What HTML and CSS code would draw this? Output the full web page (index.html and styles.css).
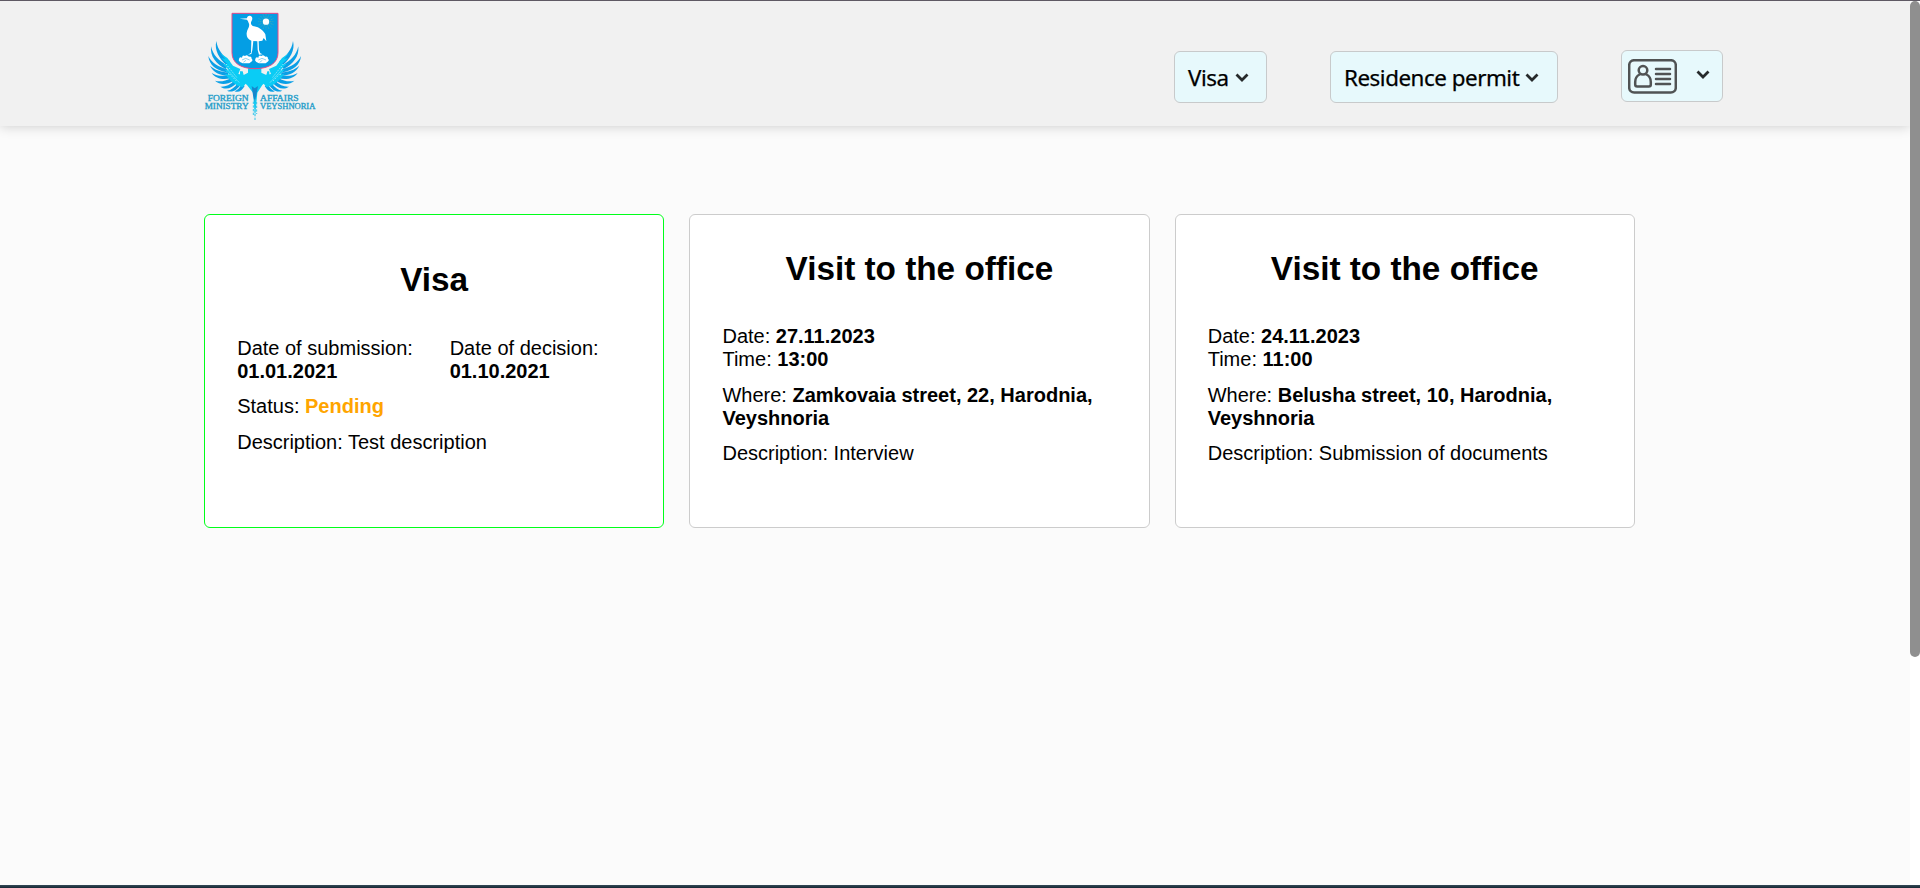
FILE: index.html
```html
<!DOCTYPE html>
<html lang="en">
<head>
<meta charset="utf-8">
<title>Foreign Affairs Ministry Veyshnoria</title>
<link rel="stylesheet" href="styles.css">
</head>
<body>
<div class="page">
<div class="view">
  <header class="header">
    <a class="logo">
      <svg width="114" height="114" viewBox="42 33 342 342">
        <defs>
          <g id="wing">
            <g fill="#0b9fe6">
              <path d="M79 123C83 150 98 166 120 184L111 196C88 178 72 150 79 123Z"/>
              <path d="M63 139C69 166 85 181 112 197L107 207C78 192 60 170 63 139Z"/>
              <path d="M55 168C65 188 83 201 112 207L110 217C80 212 57 195 55 168Z"/>
              <path d="M60 197C75 210 92 216 114 217L115 227C90 226 69 217 60 197Z"/>
              <path d="M65 219C80 228 96 229 118 226L122 235C98 240 77 236 65 219Z"/>
              <path d="M75 242C90 246 105 244 124 233L130 242C111 254 91 256 75 242Z"/>
              <path d="M91 260C106 261 119 256 134 241L140 249C126 265 107 271 91 260Z"/>
              <path d="M111 272C124 270 134 262 144 248L151 254C142 269 127 280 111 272Z"/>
              <path d="M134 274C144 270 149 263 155 253L164 258C157 271 146 279 134 274Z"/>
            </g>
            <path fill="#0accf5" d="M91 160L112 174L129 197L151 207L145 222L160 225L163 238L169 249L158 262L140 256L120 240L105 222L119 224L104 209L116 209L99 192L112 192L94 174L106 177Z"/>
            <path d="M108 192L140 232M112 209L150 250M120 223L139 243" stroke="#e9f5f8" stroke-width="2" stroke-dasharray="4 4"/>
          </g>
        </defs>
        <use href="#wing"/>
        <use href="#wing" transform="translate(388 0) scale(-1 1)"/>
        <path fill="#0accf5" d="M174 205H214V218L229 225L232 214H238V237L217 255L202 278L195 350L189 278L171 255L150 237V214H158L161 225L174 218Z"/>
        <path fill="#1687cc" d="M185 258L194 265L204 258L199 286L194 306L189 286Z"/>
        <path d="M190 305V346M195 298V363M200 306V342" stroke="#39c5ea" stroke-width="3" stroke-dasharray="7 4"/>
        <path d="M126 40H264V158C264 190 236 206 195 206C154 206 126 190 126 158Z" fill="#049ee4" stroke="#e64886" stroke-width="3"/>
        <path d="M228 42V88M205 65H251M211 48L245 82M245 48L211 82M219 43L237 87M206 56L250 74M206 74L250 56M219 87L237 43" stroke="#7fb58d" stroke-width="1.5" stroke-dasharray="3 2"/>
        <circle cx="228" cy="65" r="9.5" fill="#fff"/>
        <path fill="#fff" d="M149 56L171 55C171 48 177 46 182 48C188 50 188 57 185 62C180 70 184 77 192 79C209 82 219 91 226 103L229 124L221 114L217 122L206 124L207 150L211 160L218 163L207 164L203 150L202 124L190 123L187 150L184 162L174 164L183 158L184 122C173 118 169 110 170 99C171 88 180 81 177 71C175 65 173 61 171 59Z"/>
        <g fill="#fff">
          <path id="flower" d="M147 177Q148 170 156 173Q157 164 165 168Q171 162 177 170Q185 168 185 176Q190 181 184 185L178 190H158L150 186Q144 182 147 177Z"/>
          <use href="#flower" x="49"/>
        </g>
        <path d="M156 180L167 175L179 180M160 187L168 181M205 180L216 175L228 180M209 187L217 181" fill="none" stroke="#58bce6" stroke-width="2"/>
        <g class="logo-text">
          <text x="53" y="304" textLength="123" lengthAdjust="spacingAndGlyphs">FOREIGN</text>
          <text x="210" y="304" textLength="116" lengthAdjust="spacingAndGlyphs">AFFAIRS</text>
          <text x="44" y="328" textLength="132" lengthAdjust="spacingAndGlyphs">MINISTRY</text>
          <text x="210" y="328" textLength="166" lengthAdjust="spacingAndGlyphs">VEYSHNORIA</text>
        </g>
      </svg>
    </a>
    <nav class="nav">
      <button class="menu menu-visa"><span>Visa</span><svg class="chevron" width="14" height="10" viewBox="0 0 14 10"><path d="M1.5 1.5L7 7L12.5 1.5"/></svg></button>
      <button class="menu menu-permit"><span>Residence permit</span><svg class="chevron" width="14" height="10" viewBox="0 0 14 10"><path d="M1.5 1.5L7 7L12.5 1.5"/></svg></button>
      <button class="menu menu-account">
        <svg class="id-card" width="49" height="35" viewBox="0 0 49 35">
          <rect x="1.2" y="1.2" width="46.6" height="32.4" rx="5"/>
          <circle cx="15" cy="11.3" r="4.3"/>
          <path d="M11.5 15.5C8.5 17 7.2 19.5 7.2 23V25.5Q7.2 27.5 9.2 27.5H20.8Q22.8 27.5 22.8 25.5V23C22.8 19.5 21.5 17 18.5 15.5"/>
          <path d="M28 10H42M28 15H42M28 20H42M28 25H42"/>
        </svg>
        <svg class="chevron" width="14" height="10" viewBox="0 0 14 10"><path d="M1.5 1.5L7 7L12.5 1.5"/></svg>
      </button>
    </nav>
  </header>
  <main class="cards">
    <section class="card card-active">
      <h2>Visa</h2>
      <div class="dates">
        <p>Date of submission:<br><b>01.01.2021</b></p>
        <p>Date of decision:<br><b>01.10.2021</b></p>
      </div>
      <p>Status: <b class="pending">Pending</b></p>
      <p>Description: Test description</p>
    </section>
    <section class="card">
      <h2>Visit to the office</h2>
      <p>Date: <b>27.11.2023</b><br>Time: <b>13:00</b></p>
      <p>Where: <b>Zamkovaia street, 22, Harodnia, Veyshnoria</b></p>
      <p>Description: Interview</p>
    </section>
    <section class="card">
      <h2>Visit to the office</h2>
      <p>Date: <b>24.11.2023</b><br>Time: <b>11:00</b></p>
      <p>Where: <b>Belusha street, 10, Harodnia, Veyshnoria</b></p>
      <p>Description: Submission of documents</p>
    </section>
  </main>
</div>
<div class="scrollbar"><div class="thumb"></div></div>
</div>
<div class="bottom-edge"></div>
</body>
</html>
```
FILE: styles.css
```css
* { box-sizing: border-box; }
body {
  margin: 0;
  height: 888px;
  overflow: hidden;
  display: flex;
  flex-direction: column;
  border-top: 1px solid #5f5964;
  background: #fff;
  color: #000;
  font: 20px/23px "Liberation Sans", Arial, sans-serif;
}
.page { flex: 1; display: flex; min-height: 0; }
.view { flex: 1; background: #fbfbfb; overflow: hidden; }
.header {
  height: 125px;
  padding: 10px 187px 0 204px;
  display: flex;
  justify-content: space-between;
  align-items: flex-start;
  background: #f1f1f1;
  box-shadow: 0 0 12px rgba(0, 0, 0, 0.2);
}
.logo svg { display: block; }
.logo-text {
  fill: #249dc9;
  font: 24px "Liberation Serif", "Times New Roman", serif;
  stroke: #249dc9;
  stroke-width: 1px;
}
.nav { display: flex; gap: 63px; padding-top: 39px; }
.menu {
  height: 52px;
  border: 1px solid #c8cacb;
  border-radius: 6px;
  background: #e7f9fc;
  display: flex;
  align-items: center;
  padding: 2px 0 0 13px;
  margin: 0;
  color: #000;
  font: 400 22.4px/30px "Noto Sans", "Open Sans", sans-serif;
  letter-spacing: -0.48px;
  -webkit-text-stroke: 0.25px #000;
}
.menu-visa { width: 93px; margin-top: 1px; }
.menu-permit { width: 228px; margin-top: 1px; }
.menu-account { width: 102px; padding: 0 0 0 6px; }
.chevron { margin-left: 6px; fill: none; stroke: #262a2b; stroke-width: 2.8; }
.menu-account .chevron { margin: 0 0 3px 19px; }
.id-card { fill: none; stroke: #505354; stroke-width: 2.5; stroke-linecap: round; }
.cards {
  display: grid;
  grid-template-columns: repeat(3, 460.25px);
  gap: 25px;
  margin: 88px 0 0 204px;
}
.card {
  height: 314px;
  padding: 35px 32.2px;
  border: 1px solid #ccc;
  border-radius: 6px;
  background: #fff;
}
.card-active { border-color: #00ff1a; padding-top: 46px; }
.card-active h2 { margin-bottom: 38px; }
h2 {
  margin: 0 0 37px;
  font-size: 33.3px;
  line-height: 38px;
  text-align: center;
}
.card-active h2 { margin-bottom: 37.7px; }
p { margin: 0 0 12.5px; }
.dates { display: grid; grid-template-columns: 1fr 1fr; column-gap: 31px; }
.pending { color: #ffa500; }
.scrollbar { width: 10px; background: #fff; }
.thumb { height: 656px; border-radius: 5px; background: #8f8f8f; }
.bottom-edge { height: 3px; background: linear-gradient(#344a57, #172733); }
```
